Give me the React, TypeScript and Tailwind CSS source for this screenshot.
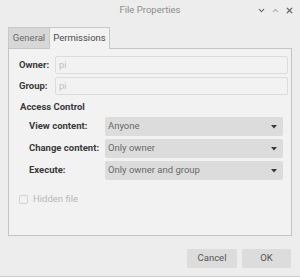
import { ChevronDown, ChevronUp, X } from 'lucide-react';

const labelCls = 'text-[9.5px] font-bold text-[#3a3a3a]';

function Campo({ etiqueta, valor }: { etiqueta: string; valor: string }) {
  return (
    <div className="flex items-center h-[18px]">
      <span className={`${labelCls} w-[36px]`}>{etiqueta}</span>
      <div className="flex-1 h-full flex items-center px-[3px] bg-[#f2f2f2] border border-[#dcdcdc] rounded-[2px] text-[9.5px] text-[#c0c0c0]">
        {valor}
      </div>
    </div>
  );
}

function Selector({ etiqueta, valor }: { etiqueta: string; valor: string }) {
  return (
    <div className="flex items-center h-[19px]">
      <span className={`${labelCls} w-[76px]`}>{etiqueta}</span>
      <div className="w-[178px] h-full flex items-center justify-between pl-[3px] pr-[6px] bg-[#dcdcdc] rounded-[2px] text-[9.5px] text-[#6a6a6a]">
        <span>{valor}</span>
        <svg width="6" height="4" viewBox="0 0 6 4"><path d="M0 0h6L3 3.5z" fill="#3a3a3a" /></svg>
      </div>
    </div>
  );
}

export default function App() {
  return (
    <div className="w-[300px] h-[277px] bg-[#ededed] flex flex-col border-b border-[#cfcfcf] font-['Roboto',sans-serif] overflow-hidden">
      <div className="relative h-[20px] flex items-center justify-center">
        <span className="text-[9.5px] text-[#8c8c8c]">File Properties</span>
        <div className="absolute right-[6px] top-0 h-full flex items-center gap-[5px]">
          <ChevronDown size={9} strokeWidth={3} className="text-[#6a6a6a]" />
          <ChevronUp size={9} strokeWidth={3} className="text-[#b5b5b5]" />
          <X size={9} strokeWidth={3.5} className="text-[#6a6a6a]" />
        </div>
      </div>

      <div className="px-[8px] pt-[6px]">
        <div className="flex h-[22px] items-end">
          <div className="w-[42px] h-[21px] flex items-center justify-center bg-[#d7d7d7] border border-b-0 border-[#c8c8c8] text-[9.5px] text-[#6a6a6a]">
            General
          </div>
          <div className="w-[60px] h-[22px] flex items-center justify-center bg-[#f2f2f2] border border-b-0 border-l-0 border-[#c8c8c8] text-[9.5px] text-[#4a4a4a] relative top-[1px]">
            Permissions
          </div>
        </div>

        <div className="h-[188px] bg-[#f2f2f2] border border-[#c4c4c4] pl-[10px] pr-[3px] pt-[7px] flex flex-col">
          <div className="flex flex-col gap-[3px]">
            <Campo etiqueta="Owner:" valor="pi" />
            <Campo etiqueta="Group:" valor="pi" />
          </div>
          <div className={`${labelCls} mt-[6px] ml-[1px] h-[12px] leading-[12px]`}>Access Control</div>
          <div className="flex flex-col gap-[3px] mt-[4px] ml-[10px]">
            <Selector etiqueta="View content:" valor="Anyone" />
            <Selector etiqueta="Change content:" valor="Only owner" />
            <Selector etiqueta="Execute:" valor="Only owner and group" />
          </div>
          <div className="flex items-center gap-[5px] mt-[12px]">
            <div className="w-[9px] h-[9px] border border-[#d2d2d2] rounded-[2px] bg-[#f2f2f2]" />
            <span className="text-[9.5px] text-[#b8b8b8]">Hidden file</span>
          </div>
        </div>
      </div>

      <div className="flex justify-end gap-[5px] pr-[9px] mt-[13px]">
        <button className="w-[50px] h-[19px] bg-[#dcdcdc] rounded-[2px] text-[9.5px] text-[#555]">Cancel</button>
        <button className="w-[49px] h-[19px] bg-[#dcdcdc] rounded-[2px] text-[9.5px] text-[#555]">OK</button>
      </div>
    </div>
  );
}
